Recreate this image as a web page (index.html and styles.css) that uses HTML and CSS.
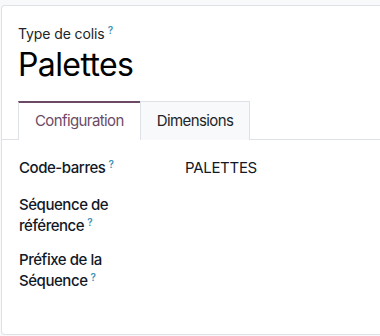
FILE: index.html
```html
<!DOCTYPE html>
<html lang="fr">
<head>
<meta charset="utf-8">
<link rel="stylesheet" href="styles.css">
</head>
<body>
<div class="sheet">
  <div class="title-block">
    <div class="field-label">Type de colis<sup class="help">?</sup></div>
    <h1 class="name">Palettes</h1>
  </div>
  <div class="tabs">
    <div class="tab active">Configuration</div>
    <div class="tab">Dimensions</div>
  </div>
  <div class="group">
    <div class="row">
      <div class="label">Code-barres<sup class="help">?</sup></div>
      <div class="value">PALETTES</div>
    </div>
    <div class="row">
      <div class="label">Séquence de référence<sup class="help">?</sup></div>
      <div class="value"></div>
    </div>
    <div class="row">
      <div class="label">Préfixe de la Séquence<sup class="help">?</sup></div>
      <div class="value"></div>
    </div>
  </div>
</div>
</body>
</html>
```
FILE: styles.css
```css
html, body {
  margin: 0;
  padding: 0;
  background: #f8f9fa;
  font-family: Inter, "Noto Sans", sans-serif;
  color: #111827;
}
body {
  padding-top: 5px;
  padding-left: 1px;
  padding-bottom: 1px;
  overflow: hidden;
}
.sheet {
  background: #fff;
  border: 1px solid #dee2e6;
  border-right: none;
  border-radius: 4px 0 0 4px;
  height: 330px;
  box-sizing: border-box;
}
.title-block {
  padding: 18px 16px 0;
}
.field-label {
  font-size: 14px;
  line-height: 20px;
  color: #212529;
  letter-spacing: -0.1px;
}
.help {
  color: #3b8fb5;
  font-size: 10px;
  font-weight: 600;
  margin-left: 3px;
  line-height: 0;
  vertical-align: 5px;
  letter-spacing: 0;
}
.name {
  margin: 2px 0 0;
  font-size: 32px;
  font-weight: 400;
  line-height: 38px;
  color: #000;
  letter-spacing: -0.6px;
}
.tabs {
  display: flex;
  margin-top: 17px;
  padding-left: 16px;
  border-bottom: 1px solid #dee2e6;
}
.tab {
  font-size: 15px;
  line-height: 20px;
  letter-spacing: -0.6px;
  padding: 9px 16px 8px;
  border: 1px solid #dee2e6;
  border-bottom: none;
  background: #f8f9fa;
  color: #212529;
  margin-bottom: -1px;
}
.tab.active {
  background: #fff;
  color: #6c4a66;
  border-top: 2px solid #6c4a66;
  padding-top: 8px;
  padding-bottom: 9px;
  border-right: none;
}
.group {
  padding: 17px 17px 0;
}
.row {
  display: flex;
  margin-bottom: 13px;
  min-height: 24px;
}
.label {
  width: 110px;
  font-size: 15px;
  line-height: 21px;
  font-weight: 500;
  letter-spacing: -0.45px;
  color: #111827;
}
.value {
  margin-left: 56px;
  font-size: 15px;
  line-height: 21px;
  letter-spacing: -0.3px;
  color: #111827;
}
```
